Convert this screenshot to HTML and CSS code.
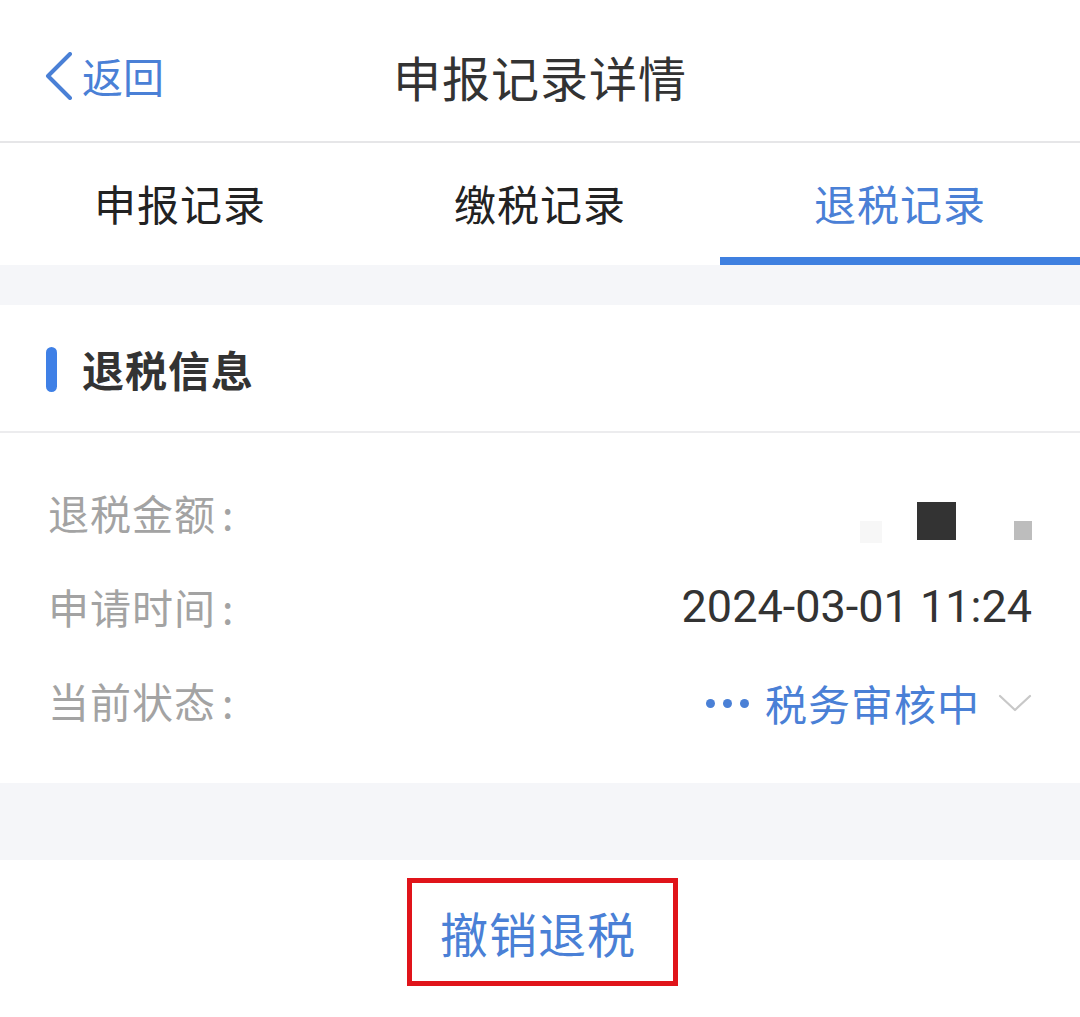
FILE: index.html
```html
<!DOCTYPE html>
<html lang="zh-CN">
<head>
<meta charset="utf-8">
<title>申报记录详情</title>
<link rel="stylesheet" href="styles.css">
</head>
<body>
<div class="page">
  <header class="nav">
    <div class="nav-left">
      <svg class="back-icon" width="30" height="48" viewBox="0 0 30 48"><path d="M26 2 L4 24 L26 46" fill="none" stroke="#4a80d6" stroke-width="4" stroke-linecap="round" stroke-linejoin="round"/></svg>
      <span class="back-text">返回</span>
    </div>
    <h1 class="nav-title">申报记录详情</h1>
    <div class="nav-right"></div>
  </header>

  <nav class="tabs">
    <div class="tab">申报记录</div>
    <div class="tab">缴税记录</div>
    <div class="tab active">退税记录</div>
  </nav>

  <div class="gap"></div>

  <section class="card">
    <div class="card-head">
      <span class="head-bar"></span>
      <span class="head-text">退税信息</span>
    </div>
    <div class="rows">
      <div class="row">
        <span class="label">退税金额<span class="colon">:</span></span>
        <span class="value masked">
          <i class="sq sq-faint"></i>
          <i class="sq sq-dark"></i>
          <i class="sq sq-light"></i>
        </span>
      </div>
      <div class="row">
        <span class="label">申请时间<span class="colon">:</span></span>
        <span class="value date">2024-03-01 11:24</span>
      </div>
      <div class="row">
        <span class="label">当前状态<span class="colon">:</span></span>
        <span class="value status">
          <span class="dots"><i></i><i></i><i></i></span>
          <span class="status-text">税务审核中</span>
          <svg class="chev" width="34" height="20" viewBox="0 0 34 20"><path d="M2 3 L17 17 L32 3" fill="none" stroke="#c8c8c8" stroke-width="2.2" stroke-linecap="round" stroke-linejoin="round"/></svg>
        </span>
      </div>
    </div>
  </section>

  <div class="gap2"></div>

  <footer class="footer">
    <div class="cancel-box">撤销退税</div>
  </footer>
</div>
</body>
</html>
```

FILE: styles.css
```css
* { box-sizing: border-box; margin: 0; padding: 0; }
html, body { background: #fff; }
body {
  font-family: "Noto Sans CJK SC", "Noto Sans", sans-serif;
  width: 1080px;
  height: 1017px;
  overflow: hidden;
}
.page { display: flex; flex-direction: column; width: 1080px; }

.nav {
  height: 143px;
  border-bottom: 2px solid #e6e6e8;
  display: grid;
  grid-template-columns: 1fr auto 1fr;
  align-items: center;
  padding-top: 10px;
}
.nav-left { display: flex; align-items: center; padding-left: 44px; gap: 8px; }
.back-icon { display: block; }
.back-text { font-size: 41px; color: #4a80d6; line-height: 1; }
.nav-title { font-size: 48px; font-weight: 400; color: #333; line-height: 1; letter-spacing: 1px; }

.tabs {
  display: grid;
  grid-template-columns: repeat(3, 1fr);
  height: 122px;
}
.tab {
  display: flex;
  align-items: center;
  justify-content: center;
  font-size: 42px;
  color: #222;
  line-height: 1;
  padding-top: 6px;
  border-bottom: 8px solid transparent;
  letter-spacing: 1px;
}
.tab.active { color: #4a80d6; border-bottom-color: #3f80e0; }

.gap { height: 40px; background: #f5f6f9; }

.card { background: #fff; }
.card-head {
  height: 128px;
  display: flex;
  align-items: center;
  padding-left: 46px;
  gap: 25px;
  border-bottom: 2px solid #ececee;
  padding-top: 2px;
}
.head-bar { width: 11px; height: 45px; border-radius: 6px; background: #3f80e6; }
.head-text { font-size: 42px; font-weight: 700; color: #333; line-height: 1; letter-spacing: 1px; }

.rows { padding: 32px 48px 36px 48px; }
.row {
  height: 94px;
  display: flex;
  align-items: center;
  justify-content: space-between;
}
.label { font-size: 41px; color: #a3a3a3; line-height: 1; letter-spacing: 1px; display: flex; align-items: center; }
.colon { margin-left: 6px; }
.value { font-size: 40px; color: #333; line-height: 1; }
.date { font-family: Roboto, "Noto Sans", sans-serif; font-size: 45px; color: #333; }

.masked { display: flex; align-items: flex-end; padding-top: 20px; }
.sq { display: block; }
.sq-faint { width: 22px; height: 22px; background: #f7f7f7; margin-right: 35px; }
.sq-dark { width: 39px; height: 38px; background: #333; margin-right: 58px; margin-bottom: 3px; }
.sq-light { width: 18px; height: 19px; background: #bdbdbd; margin-bottom: 3px; }

.status { display: flex; align-items: center; color: #4a80d6; padding-top: 6px; }
.dots { display: flex; gap: 8px; margin-right: 16px; }
.dots i { display: block; width: 9px; height: 9px; border-radius: 50%; background: #4a80d6; }
.status-text { font-size: 42px; letter-spacing: 1px; }
.chev { margin-left: 18px; }

.gap2 { height: 77px; background: #f5f6f9; }

.footer {
  height: 155px;
  display: flex;
  justify-content: center;
  padding-top: 18px;
  padding-left: 4px;
}
.cancel-box {
  width: 271px;
  height: 108px;
  border: 5px solid #e0141a;
  display: flex;
  align-items: center;
  justify-content: center;
  font-size: 48px;
  color: #4a80d6;
  line-height: 1;
  letter-spacing: 1px;
  padding-right: 8px;
}
```
